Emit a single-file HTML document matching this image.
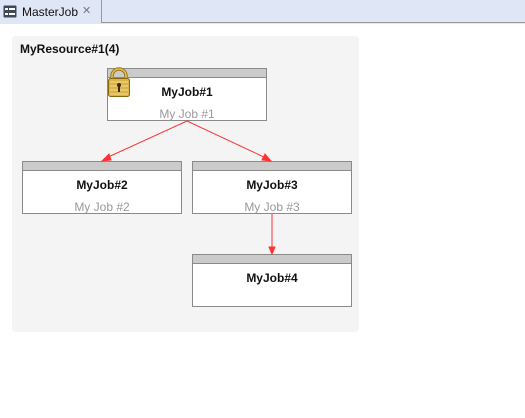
<!DOCTYPE html>
<html><head><meta charset="utf-8"><style>
*{margin:0;padding:0;box-sizing:border-box}
body{width:525px;height:418px;background:#fff;font-family:"Liberation Sans",sans-serif;position:relative;overflow:hidden}
.bar{position:absolute;left:0;top:0;width:525px;height:24px;background:#dfe6f5}
.tabline{position:absolute;left:101px;top:0;width:1px;height:23px;background:#999}
.hline{position:absolute;left:101px;top:22px;right:0;height:1px;background:#999}
.tabt{position:absolute;left:22px;top:5px;font-size:12px;color:#111}
.x{position:absolute;left:82px;top:4px;font-size:11px;color:#777}
.panel{position:absolute;left:12px;top:36px;width:347px;height:296px;background:#f4f4f4;border-radius:4px}
.ptitle{position:absolute;left:20px;top:42px;font-size:12px;font-weight:bold;color:#111}
.job{position:absolute;width:160px;height:53px;background:#fff;border:1px solid #8a8a8a}
.job .h{height:9px;background:#cbcbcb;border-bottom:1px solid #8a8a8a}
.job .n{text-align:center;font-size:12px;font-weight:bold;color:#111;margin-top:7px;line-height:14px}
.job .d{text-align:center;font-size:12px;color:#9a98a0;margin-top:8px;line-height:14px}
</style></head><body>
<div class="bar"></div>
<div class="tabline"></div><div class="hline"></div>
<svg style="position:absolute;left:3px;top:5px" width="14" height="13"><rect x="0.5" y="0.5" width="13" height="12" rx="1" fill="#3d4a5c"/><rect x="2" y="3" width="3" height="2" fill="#fff"/><rect x="6" y="3" width="6" height="2" fill="#fff"/><rect x="2" y="8" width="3" height="2" fill="#fff"/><rect x="6" y="8" width="6" height="2" fill="#fff"/></svg>
<div class="tabt">MasterJob</div><div class="x">✕</div>
<div class="panel"></div>
<div class="ptitle">MyResource#1(4)</div>
<div class="job" style="left:107px;top:68px"><div class="h"></div><div class="n">MyJob#1</div><div class="d">My Job #1</div></div>
<div class="job" style="left:22px;top:161px"><div class="h"></div><div class="n">MyJob#2</div><div class="d">My Job #2</div></div>
<div class="job" style="left:192px;top:161px"><div class="h"></div><div class="n">MyJob#3</div><div class="d">My Job #3</div></div>
<div class="job" style="left:192px;top:254px"><div class="h"></div><div class="n">MyJob#4</div></div>
<svg style="position:absolute;left:0;top:0" width="525" height="418">
<g stroke="#f33" stroke-width="1" fill="#f33">
<line x1="187" y1="121" x2="106" y2="158"/><polygon points="102,161 109,154 111,160"/>
<line x1="187" y1="121" x2="266" y2="158"/><polygon points="271,161 262,160 265,154"/>
<line x1="272" y1="214" x2="272" y2="250"/><polygon points="269,247 275,247 272,254"/>
</g>
<path d="M112,80 V76 a7,7 0 0 1 14,0 V80" fill="none" stroke="#a07818" stroke-width="3.5"/>
<path d="M112,80 V76 a7,7 0 0 1 14,0 V80" fill="none" stroke="#e8c860" stroke-width="1.3"/>
<rect x="108.5" y="78.5" width="21" height="18" rx="2" fill="#d9b24a" stroke="#8a6512"/>
<g stroke="#f2dc8a" stroke-width="1"><line x1="110" y1="82" x2="128" y2="82"/><line x1="110" y1="86" x2="128" y2="86"/><line x1="110" y1="90" x2="128" y2="90"/><line x1="110" y1="94" x2="128" y2="94"/></g>
<circle cx="119" cy="85" r="2" fill="#3a2a08"/><rect x="118" y="85" width="2" height="7" fill="#3a2a08"/>
</svg>
</body></html>
